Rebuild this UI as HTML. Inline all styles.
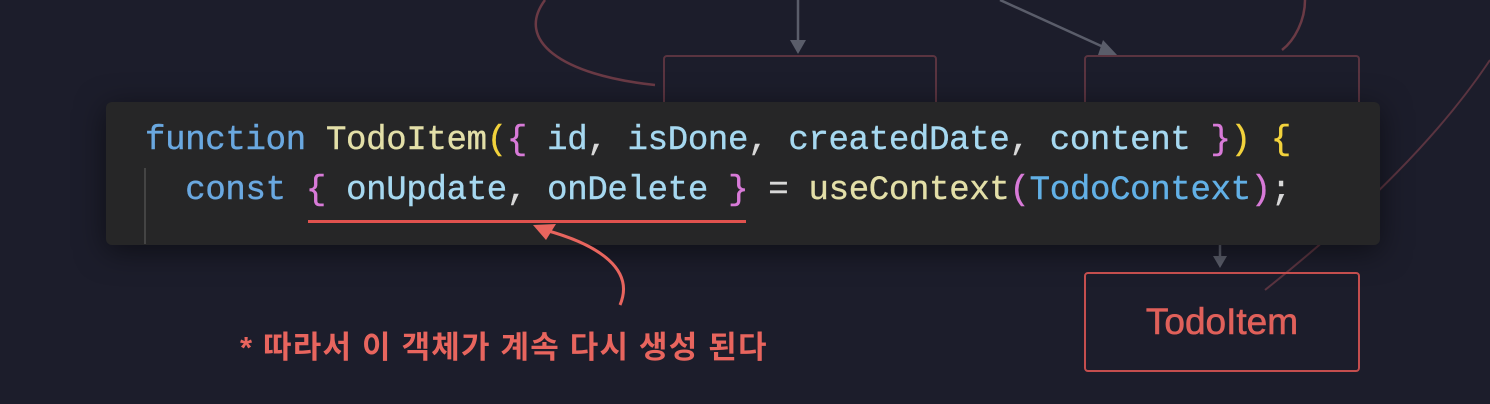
<!DOCTYPE html>
<html><head><meta charset="utf-8"><style>
body{margin:0;width:1490px;height:404px;background:#1c1d2b;overflow:hidden;position:relative;font-family:"Liberation Sans","Noto Sans CJK KR",sans-serif}
.box{position:absolute;border:2px solid #5a3440;border-radius:4px}
.code{position:absolute;left:106px;top:102px;width:1274px;height:143px;background:#262627;border-radius:6px;box-shadow:0 6px 30px rgba(0,0,0,.5)}
.ln{position:absolute;left:39px;font-family:"Liberation Mono",monospace;font-size:34px;letter-spacing:-0.3px;white-space:pre;color:#a6d8f0;-webkit-text-stroke:0.4px currentColor}
.k{color:#6aa8e0}.f{color:#e3dfa8}.p{color:#d87ad8}.y{color:#f2d23c}.w{color:#d8d8d8}.b{color:#62b0e6}
</style></head><body>
<svg width="1490" height="404" style="position:absolute;left:0;top:0">
<path d="M545 0 C515 40 560 75 655 85" stroke="#6a3a45" stroke-width="2.5" fill="none"/>
<path d="M798 0 V45" stroke="#5a5d6a" stroke-width="2.5"/>
<polygon points="790,40 806,40 798,54" fill="#5a5d6a"/>
<path d="M1000 0 L1110 50" stroke="#5a5d6a" stroke-width="2.5"/>
<polygon points="1103,40 1118,56 1098,55" fill="#5a5d6a"/>
<path d="M1305 0 C1305 20 1295 40 1282 50" stroke="#6a3a45" stroke-width="2.5" fill="none"/>
<path d="M1490 60 C1430 150 1340 230 1265 290" stroke="#5a3440" stroke-width="2" fill="none"/>
<path d="M1220 245 V262" stroke="#5a5d6a" stroke-width="2.5"/>
<polygon points="1213,256 1227,256 1220,268" fill="#5a5d6a"/>
</svg>
<div class="box" style="left:663px;top:55px;width:270px;height:60px"></div>
<div class="box" style="left:1084px;top:55px;width:272px;height:60px"></div>
<div class="code">
<div style="position:absolute;left:38px;top:66px;width:2px;height:76px;background:#444"></div>
<div class="ln" style="top:20px"><span class="k">function</span> <span class="f">TodoItem</span><span class="y">(</span><span class="p">{</span> id<span class="w">,</span> isDone<span class="w">,</span> createdDate<span class="w">,</span> content <span class="p">}</span><span class="y">)</span> <span class="y">{</span></div>
<div class="ln" style="top:70px">  <span class="k">const</span> <span class="p">{</span> onUpdate<span class="w">,</span> onDelete <span class="p">}</span> <span class="w">=</span> <span class="f">useContext</span><span class="p">(</span><span class="b">TodoContext</span><span class="p">)</span><span class="w">;</span></div>
<div style="position:absolute;left:202px;top:118px;width:438px;height:3px;background:#e0524e"></div>
</div>
<svg width="1490" height="404" style="position:absolute;left:0;top:0">
<path d="M620 305 C635 270 600 245 545 230" stroke="#e8655e" stroke-width="3" fill="none"/>
<polygon points="533,225 556,224 546,240" fill="#e8655e"/>
</svg>
<div style="position:absolute;left:240px;top:322px;font-size:31px;font-weight:bold;color:#e8655e;white-space:nowrap;letter-spacing:1.2px">* 따라서 이 객체가 계속 다시 생성 된다</div>
<div class="box" style="left:1084px;top:272px;width:272px;height:96px;border-color:#c44e4e;display:flex;align-items:center;justify-content:center;color:#e0605a;font-size:37px;-webkit-text-stroke:0.6px #e0605a">TodoItem</div>
</body></html>
